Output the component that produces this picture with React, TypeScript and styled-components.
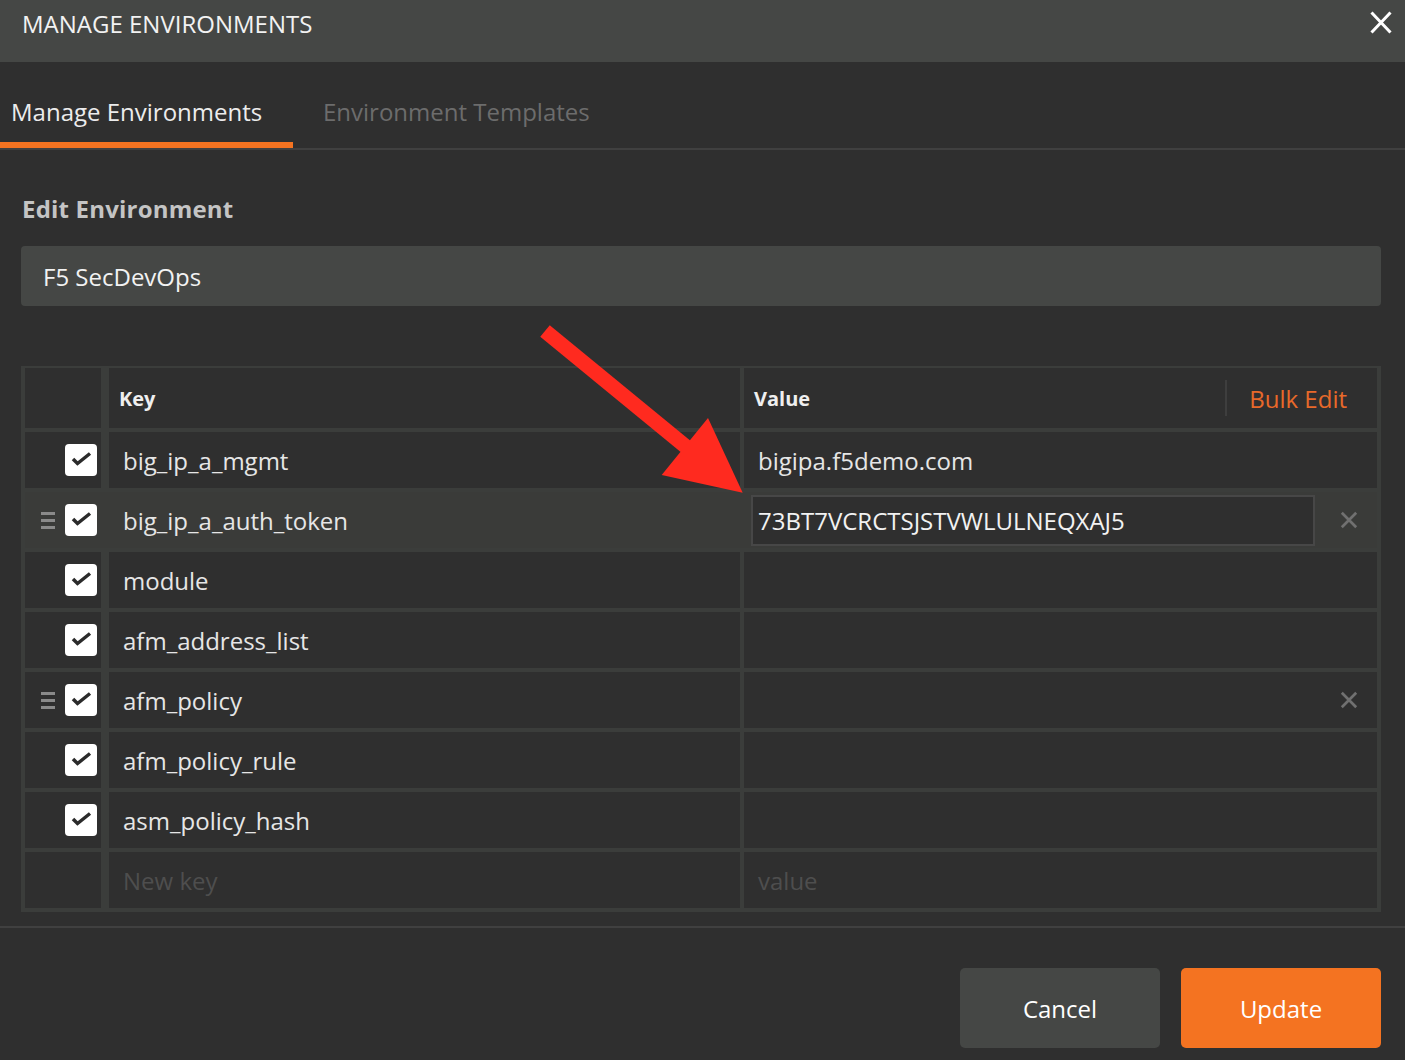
import styled, { createGlobalStyle } from 'styled-components';

const GlobalStyle = createGlobalStyle`
  html, body {
    margin: 0;
    padding: 0;
    background: #2f2f2f;
  }
  body {
    font-family: "Open Sans", "Liberation Sans", sans-serif;
    color: #e6e6e6;
  }
`;

const BORDER = '#3b3d3b';

const Dialog = styled.div`
  position: relative;
  width: 1405px;
  height: 1060px;
  background: #2f2f2f;
  overflow: hidden;
`;

const Header = styled.div`
  height: 62px;
  background: #454745;
  display: flex;
  align-items: center;
  justify-content: space-between;
  padding: 0 13px 0 22px;
  box-sizing: border-box;
`;

const Title = styled.div`
  font-size: 24px;
  color: #f2f2f2;
  margin-top: -16px;
`;

const CloseButton = styled.div`
  width: 22px;
  height: 23px;
  margin-top: -18px;
  display: flex;
`;

const TabBar = styled.div`
  display: flex;
  border-bottom: 2px solid #404040;
`;

const Tab = styled.div<{ $active?: boolean }>`
  width: ${(p) => (p.$active ? '293px' : 'auto')};
  box-sizing: border-box;
  padding: 34px 0 14px ${(p) => (p.$active ? '11px' : '30px')};
  line-height: 32px;
  font-size: 24px;
  color: ${(p) => (p.$active ? '#ececec' : '#6c6c6c')};
  border-bottom: 6px solid ${(p) => (p.$active ? '#f47321' : 'transparent')};
`;

const Body = styled.div`
  padding: 0 24px 0 21px;
`;

const SectionTitle = styled.div`
  margin: 43px 0 0 1px;
  line-height: 32px;
  font-size: 24px;
  font-weight: 700;
  letter-spacing: 0.2px;
  color: #c4c4c4;
`;

const NameInput = styled.div`
  margin-top: 21px;
  height: 60px;
  background: #454745;
  border-radius: 4px;
  display: flex;
  align-items: center;
  padding-left: 22px;
  font-size: 24px;
  color: #f2f2f2;
`;

const Table = styled.div`
  margin-top: 60px;
  display: flex;
  flex-direction: column;
  gap: 4px;
  background: ${BORDER};
  border: 4px solid ${BORDER};
  border-top-width: 2px;
`;

const Row = styled.div<{ $head?: boolean; $active?: boolean }>`
  display: grid;
  grid-template-columns: 80px 631px 1fr;
  gap: 4px;
  height: ${(p) => (p.$head ? '60px' : '56px')};
  background: ${(p) => (p.$active ? '#3a3b39' : BORDER)};
`;

const Cell = styled.div<{ $active?: boolean }>`
  background: ${(p) => (p.$active ? '#3a3b39' : '#2f2f2f')};
  display: flex;
  align-items: center;
  min-width: 0;
`;

const CheckCell = styled(Cell)`
  border-right: 4px solid ${(p) => (p.$active ? '#3a3b39' : BORDER)};
  justify-content: flex-end;
  gap: 10px;
  padding-right: 4px;
`;

const HeadLabel = styled.div`
  padding-left: 10px;
  font-size: 20px;
  font-weight: 700;
  color: #efefef;
`;

const ValueHead = styled(Cell)`
  justify-content: space-between;
  padding: 0 30px 0 0;
`;

const BulkEdit = styled.div`
  display: flex;
  align-items: center;
  gap: 22px;
  font-size: 24px;
  color: #e8692a;
  &::before {
    content: '';
    width: 2px;
    height: 36px;
    background: #3e3e3e;
  }
`;

const KeyText = styled.div<{ $placeholder?: boolean }>`
  padding-left: 14px;
  font-size: 24px;
  color: ${(p) => (p.$placeholder ? '#4e4e4e' : '#e6e6e6')};
`;

const ValueCell = styled(Cell)`
  justify-content: space-between;
  padding-right: 19px;
`;

const ValueBox = styled.div`
  margin-left: 7px;
  width: 564px;
  height: 51px;
  box-sizing: border-box;
  border: 2px solid #474747;
  background: #2f2f2f;
  display: flex;
  align-items: center;
  padding-left: 5px;
  font-size: 24px;
  color: #f2f2f2;
`;

const Handle = styled.div`
  width: 14px;
  display: flex;
  flex-direction: column;
  gap: 4px;
  span {
    height: 3px;
    background: #8a8a8a;
  }
`;

const Checkbox = styled.div`
  width: 32px;
  height: 32px;
  border-radius: 4px;
  background: #ffffff;
  display: flex;
`;

const Footer = styled.div`
  margin-top: 14px;
  border-top: 2px solid #404040;
  display: flex;
  justify-content: flex-end;
  gap: 21px;
  padding: 40px 24px 0 0;
`;

const Button = styled.div<{ $primary?: boolean }>`
  width: 200px;
  height: 80px;
  border-radius: 5px;
  display: flex;
  align-items: center;
  justify-content: center;
  font-size: 24px;
  color: #ffffff;
  background: ${(p) => (p.$primary ? '#f47321' : '#454745')};
`;

const Arrow = styled.svg`
  position: absolute;
  left: 0;
  top: 0;
  pointer-events: none;
`;

type Variable = { key: string; value?: string; active?: boolean; handle?: boolean };

const rows: Variable[] = [
  { key: 'big_ip_a_mgmt', value: 'bigipa.f5demo.com' },
  { key: 'big_ip_a_auth_token', value: '73BT7VCRCTSJSTVWLULNEQXAJ5', active: true, handle: true },
  { key: 'module' },
  { key: 'afm_address_list' },
  { key: 'afm_policy', handle: true },
  { key: 'afm_policy_rule' },
  { key: 'asm_policy_hash' },
];

function Cross({ size, color, width }: { size: number; color: string; width: number }) {
  return (
    <svg width={size} height={size} viewBox="0 0 20 20">
      <path d="M2 2 L18 18 M18 2 L2 18" stroke={color} strokeWidth={width} fill="none" />
    </svg>
  );
}

function Check() {
  return (
    <Checkbox>
      <svg width="32" height="32" viewBox="0 0 32 32">
        <path d="M8 15 L12.5 19.5 L25 9.5" stroke="#2b2b2b" strokeWidth="3.5" fill="none" />
      </svg>
    </Checkbox>
  );
}

export default function App() {
  return (
    <Dialog>
      <GlobalStyle />
      <Header>
        <Title>MANAGE ENVIRONMENTS</Title>
        <CloseButton>
          <svg width="22" height="23" viewBox="0 0 22 23">
            <path d="M1.5 1.5 L20.5 21.5 M20.5 1.5 L1.5 21.5" stroke="#ffffff" strokeWidth="3" fill="none" />
          </svg>
        </CloseButton>
      </Header>
      <TabBar>
        <Tab $active>Manage Environments</Tab>
        <Tab>Environment Templates</Tab>
      </TabBar>
      <Body>
        <SectionTitle>Edit Environment</SectionTitle>
        <NameInput>F5 SecDevOps</NameInput>
        <Table>
          <Row $head>
            <CheckCell />
            <Cell>
              <HeadLabel>Key</HeadLabel>
            </Cell>
            <ValueHead>
              <HeadLabel>Value</HeadLabel>
              <BulkEdit>Bulk Edit</BulkEdit>
            </ValueHead>
          </Row>
          {rows.map((r) => (
            <Row key={r.key} $active={r.active}>
              <CheckCell $active={r.active}>
                {r.handle && (
                  <Handle>
                    <span />
                    <span />
                    <span />
                  </Handle>
                )}
                <Check />
              </CheckCell>
              <Cell $active={r.active}>
                <KeyText>{r.key}</KeyText>
              </Cell>
              <ValueCell $active={r.active}>
                {r.active ? (
                  <ValueBox>{r.value}</ValueBox>
                ) : (
                  <KeyText>{r.value}</KeyText>
                )}
                {r.handle && <Cross size={18} color="#707070" width={3} />}
              </ValueCell>
            </Row>
          ))}
          <Row>
            <CheckCell />
            <Cell>
              <KeyText $placeholder>New key</KeyText>
            </Cell>
            <Cell>
              <KeyText $placeholder>value</KeyText>
            </Cell>
          </Row>
        </Table>
      </Body>
      <Footer>
        <Button>Cancel</Button>
        <Button $primary>Update</Button>
      </Footer>
      <Arrow width="1405" height="1060" viewBox="0 0 1405 1060">
        <line x1="545" y1="331" x2="690" y2="450" stroke="#ff2a1f" strokeWidth="15" />
        <polygon points="708,418 742.7,492.7 661.7,475" fill="#ff2a1f" />
      </Arrow>
    </Dialog>
  );
}
